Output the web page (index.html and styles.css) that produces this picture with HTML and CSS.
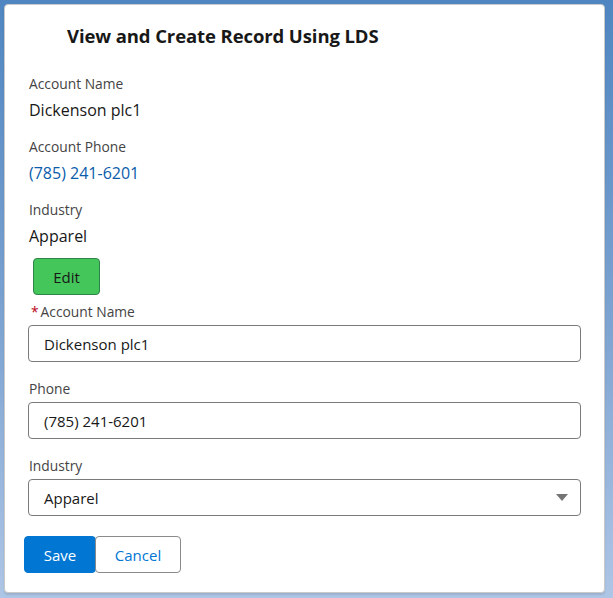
FILE: index.html
```html
<!DOCTYPE html>
<html lang="en">
<head>
<meta charset="utf-8">
<title>View and Create Record Using LDS</title>
<link rel="stylesheet" href="styles.css">
</head>
<body>
<div class="card">
  <div class="card-header">
    <h2 class="card-title">View and Create Record Using LDS</h2>
  </div>
  <div class="card-body">
    <div class="view">
      <div class="field">
        <div class="field-label">Account Name</div>
        <div class="field-value">Dickenson plc1</div>
      </div>
      <div class="field">
        <div class="field-label">Account Phone</div>
        <div class="field-value"><a class="link" href="#">(785) 241-6201</a></div>
      </div>
      <div class="field">
        <div class="field-label">Industry</div>
        <div class="field-value">Apparel</div>
      </div>
      <button class="btn btn-edit" type="button">Edit</button>
    </div>
    <form class="form">
      <div class="form-el">
        <label class="form-label"><abbr class="req">*</abbr>Account Name</label>
        <input class="input" type="text" value="Dickenson plc1">
      </div>
      <div class="form-el">
        <label class="form-label">Phone</label>
        <input class="input" type="text" value="(785) 241-6201">
      </div>
      <div class="form-el">
        <label class="form-label">Industry</label>
        <div class="select">
          <span>Apparel</span>
          <svg class="caret" width="12" height="8" viewBox="0 0 12 8"><path d="M0 0 H12 L6 7 Z" fill="#747474"/></svg>
        </div>
      </div>
      <div class="actions">
        <button class="btn btn-save" type="button">Save</button>
        <button class="btn btn-cancel" type="button">Cancel</button>
      </div>
    </form>
  </div>
</div>
</body>
</html>
```
FILE: styles.css
```css
html, body {
  margin: 0;
  padding: 0;
}
body {
  width: 613px;
  height: 598px;
  overflow: hidden;
  background: linear-gradient(180deg, #4f86c1 0%, #7ea4d2 55%, #aec6e6 100%);
  font-family: "Open Sans", "Noto Sans", sans-serif;
  color: #181818;
  padding: 4px 0 0 4px;
  box-sizing: border-box;
}
.card {
  width: 601px;
  height: 589px;
  box-sizing: border-box;
  background: #fff;
  border: 1px solid #c9c9c9;
  border-radius: 4px;
  box-shadow: 0 2px 2px rgba(0,0,0,0.1);
}
.card-header {
  height: 61px;
  display: flex;
  align-items: center;
  padding-left: 62px;
}
.card-title {
  margin: 0;
  font-size: 18.5px;
  font-weight: 700;
  color: #181818;
  letter-spacing: -0.1px;
}
.card-body {
  padding: 0 23px 0 19px;
}
.view {
  padding-left: 5px;
}
.field {
  margin-top: 16px;
}
.field:first-child {
  margin-top: 9px;
}
.field-label {
  font-size: 13.8px;
  line-height: 18px;
  color: #444;
}
.field-value {
  margin-top: 5px;
  font-size: 16px;
  line-height: 24px;
  color: #181818;
}
.link {
  color: #0b5cab;
  text-decoration: none;
}
.btn {
  font-family: inherit;
  font-size: 15px;
  height: 37px;
  border-radius: 4px;
  cursor: pointer;
  padding: 0;
}
.btn-edit {
  margin: 10px 0 0 4px;
  width: 67px;
  background: #45c65a;
  border: 1px solid #2e844a;
  color: #181818;
}
.form {
  margin-top: 8px;
}
.form-el {
  margin-bottom: 18px;
}
.form-label {
  display: block;
  padding-left: 5px;
  font-size: 13.8px;
  line-height: 18px;
  color: #444;
  margin-bottom: 4px;
}
.req {
  color: #ba0517;
  text-decoration: none;
  margin: 0 2px 0 2px;
}
.input, .select {
  display: flex;
  align-items: center;
  width: 553px;
  height: 37px;
  box-sizing: border-box;
  margin-left: 4px;
  border: 1px solid #7a7a7a;
  border-radius: 4px;
  padding: 0 12px 0 15px;
  font-family: inherit;
  font-size: 15px;
  color: #181818;
  background: #fff;
}
.select {
  justify-content: space-between;
}
.caret {
  display: block;
}
.actions {
  display: flex;
  margin-top: 20px;
}
.btn-save {
  width: 72px;
  background: #0176d3;
  border: 1px solid #0176d3;
  color: #fff;
}
.btn-cancel {
  width: 86px;
  margin-left: -1px;
  background: #fff;
  border: 1px solid #8a8a8a;
  color: #0176d3;
}
```
